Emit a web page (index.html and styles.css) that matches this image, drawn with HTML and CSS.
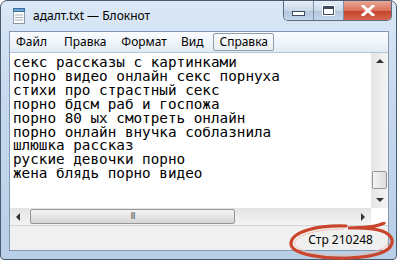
FILE: index.html
```html
<!DOCTYPE html>
<html lang="ru">
<head>
  <meta charset="UTF-8">
  <title>адалт.txt — Блокнот</title>
  <link rel="stylesheet" href="styles.css">
</head>
<body>
  <div class="window">
    <div class="titlebar">
      <svg class="app-icon" width="16" height="16" viewBox="0 0 16 16">
        <rect x="2.5" y="2.5" width="11" height="13" fill="#fdfdf6" stroke="#8a9aa8"/>
        <rect x="2.5" y="0.5" width="11" height="3" fill="#6fa3d8" stroke="#3c6e9e"/>
        <line x1="4" y1="7" x2="12" y2="7" stroke="#9fb3c6"/>
        <line x1="4" y1="9.5" x2="12" y2="9.5" stroke="#9fb3c6"/>
        <line x1="4" y1="12" x2="12" y2="12" stroke="#9fb3c6"/>
      </svg>
      <span class="title">адалт.txt — Блокнот</span>
      <div class="caption-buttons">
        <div class="cbtn min"><span class="min-glyph"></span></div>
        <div class="cbtn max"><span class="max-glyph"></span></div>
        <div class="cbtn close">
          <svg width="14" height="11" viewBox="0 0 14 11">
            <path d="M2 1 L12 10 M12 1 L2 10" stroke="#fff" stroke-width="3" stroke-linecap="square"/>
          </svg>
        </div>
      </div>
    </div>

    <div class="client">
      <div class="menubar">
        <span class="menu-item">Файл</span>
        <span class="menu-item">Правка</span>
        <span class="menu-item">Формат</span>
        <span class="menu-item">Вид</span>
        <span class="menu-item active">Справка</span>
      </div>

      <div class="editor">
        <div class="text">секс рассказы с картинками
порно видео онлайн секс порнуха
стихи про страстный секс
порно бдсм раб и госпожа
порно 80 ых смотреть онлайн
порно онлайн внучка соблазнила
шлюшка рассказ
руские девочки порно
жена блядь порно видео</div>
        <div class="vscroll">
          <span class="arrow up"></span>
          <span class="vtrack"><span class="vthumb"></span></span>
          <span class="arrow down"></span>
        </div>
      </div>

      <div class="hscroll-row">
        <div class="hscroll">
          <span class="arrow left"></span>
          <span class="htrack"><span class="hthumb"><span class="grip">III</span></span></span>
          <span class="arrow right"></span>
        </div>
        <div class="sizebox"></div>
      </div>

      <div class="statusbar">
        <span class="status-text">Стр 210248</span>
      </div>
    </div>

    <svg class="circle-mark" width="112" height="40" viewBox="0 0 112 40">
      <path d="M60 4 C 30 3, 6 10, 5 21 C 4 33, 40 37, 62 36 C 90 35, 108 29, 106 18 C 104 9, 88 5, 62 6 C 80 6, 92 4, 98 1"
            fill="none" stroke="#c9462c" stroke-width="3.2" stroke-linecap="round"/>
      <path d="M58 7 C 32 7, 10 13, 9 21 C 8 31, 42 34, 62 33 C 86 32, 103 27, 102 19"
            fill="none" stroke="#f2b59f" stroke-width="1" opacity="0.8"/>
    </svg>
  </div>
</body>
</html>
```

FILE: styles.css
```css
body {
  margin: 0;
  background: #fff;
  width: 400px;
  height: 261px;
  overflow: hidden;
}

.window {
  position: relative;
  box-sizing: border-box;
  width: 397px;
  height: 260px;
  border: 1px solid #4a5a6e;
  border-radius: 7px 7px 4px 4px;
  background: linear-gradient(180deg, #dbe8f6 0%, #c5d8ee 40%, #b9cfe8 100%);
  display: flex;
  flex-direction: column;
  font-family: "Noto Sans", "Open Sans", sans-serif;
}

.titlebar {
  height: 29px;
  display: flex;
  align-items: flex-start;
  padding-left: 10px;
}
.app-icon {
  margin-top: 7px;
}
.title {
  margin-left: 6px;
  margin-top: 7px;
  font-size: 12px;
  color: #000;
  line-height: 16px;
}

.caption-buttons {
  margin-left: auto;
  margin-right: 4px;
  display: flex;
  height: 19px;
  border: 1px solid #5a6d84;
  border-top: none;
  border-radius: 0 0 5px 5px;
  overflow: hidden;
}
.cbtn {
  display: flex;
  align-items: center;
  justify-content: center;
  height: 19px;
}
.cbtn.min, .cbtn.max {
  width: 29px;
  background: linear-gradient(180deg, #e6eef8 0%, #cad9ea 50%, #b3c6dc 51%, #c3d6ea 100%);
  border-right: 1px solid #7d8fa6;
}
.cbtn.close {
  width: 47px;
  background: linear-gradient(180deg, #e9a99a 0%, #d9705a 50%, #c4412a 51%, #d5674c 100%);
}
.min-glyph {
  width: 11px;
  height: 3px;
  margin-top: 5px;
  background: #fff;
  border: 1px solid #3e4b5c;
}
.max-glyph {
  width: 9px;
  height: 5px;
  border: 1px solid #3e4b5c;
  border-top-width: 3px;
  background: #fff;
  box-shadow: 0 0 0 1px #fff;
}

.client {
  margin: 1px 7px 8px 8px;
  flex: 1;
  display: flex;
  flex-direction: column;
  border: 1px solid #8397b0;
  background: #f0f0f0;
}

.menubar {
  height: 20px;
  display: flex;
  align-items: center;
  background: linear-gradient(180deg, #fafcfe 0%, #eef3fa 60%, #e2eaf5 100%);
  border-bottom: 1px solid #b6c6da;
  padding-left: 0;
  font-size: 12px;
}
.menu-item {
  padding: 0 6px;
  height: 18px;
  line-height: 18px;
  margin-right: 2px;
  color: #000;
}
.menu-item:nth-child(2) { margin-left: 3px; }
.menu-item:nth-child(3) { margin-left: 1px; }
.menu-item:nth-child(5) { margin-left: 2px; }
.menu-item.active {
  border: 1px solid #8e9cae;
  border-radius: 2px;
  background: linear-gradient(180deg, #fbfcfd 0%, #e9eef4 100%);
  height: 16px;
  line-height: 16px;
  padding: 0 5px;
}

.editor {
  height: 155px;
  display: flex;
  background: #fff;
}
.text {
  flex: 1;
  white-space: pre;
  font-family: "DejaVu Sans Mono", "Liberation Mono", monospace;
  font-size: 14.3px;
  line-height: 13.9px;
  padding: 3px 0 0 3px;
  color: #000;
  overflow: hidden;
}

.vscroll {
  width: 17px;
  display: flex;
  flex-direction: column;
  background: linear-gradient(90deg, #e4e4e4, #f4f4f4);
}
.arrow {
  display: block;
  position: relative;
  width: 17px;
  height: 17px;
}
.arrow::after {
  content: "";
  position: absolute;
}
.arrow.up::after, .arrow.down::after {
  left: 5px;
  border-left: 4px solid transparent;
  border-right: 4px solid transparent;
}
.arrow.up::after {
  top: 6px;
  border-bottom: 4px solid #333;
}
.arrow.down::after {
  top: 7px;
  border-top: 4px solid #333;
}
.vtrack {
  flex: 1;
  display: flex;
  flex-direction: column;
  justify-content: flex-end;
  padding-bottom: 2px;
}
.vthumb {
  display: block;
  height: 16px;
  margin: 0 1px;
  border: 1px solid #969696;
  border-radius: 2px;
  background: linear-gradient(90deg, #f4f4f4, #dcdcdc);
}

.hscroll-row {
  height: 17px;
  display: flex;
  background: #fff;
}
.hscroll {
  flex: 1;
  display: flex;
  background: linear-gradient(180deg, #e4e4e4, #f4f4f4);
}
.arrow.left {
  width: 20px;
}
.arrow.left::after {
  top: 5px;
  left: 6px;
  border-top: 4px solid transparent;
  border-bottom: 4px solid transparent;
  border-right: 4px solid #333;
}
.arrow.right::after {
  top: 5px;
  left: 7px;
  border-top: 4px solid transparent;
  border-bottom: 4px solid transparent;
  border-left: 4px solid #333;
}
.htrack {
  flex: 1;
  display: flex;
  align-items: center;
}
.hthumb {
  display: flex;
  align-items: center;
  justify-content: center;
  width: 205px;
  height: 15px;
  box-sizing: border-box;
  border: 1px solid #969696;
  border-radius: 2px;
  background: linear-gradient(180deg, #f4f4f4, #d6d6d6);
}
.grip {
  font-size: 8px;
  font-family: "DejaVu Sans", sans-serif;
  color: #666;
  letter-spacing: -1px;
  line-height: 8px;
}
.sizebox {
  width: 17px;
  background: #fff;
}

.statusbar {
  flex: 1;
  display: flex;
  align-items: center;
  justify-content: flex-end;
  padding-right: 15px;
  border-top: 1px solid #d4d4d4;
  background: #f0f0f0;
  font-size: 12px;
}
.status-text {
  margin-top: 3px;
  color: #000;
}

.circle-mark {
  position: absolute;
  left: 285px;
  top: 221px;
}
```
